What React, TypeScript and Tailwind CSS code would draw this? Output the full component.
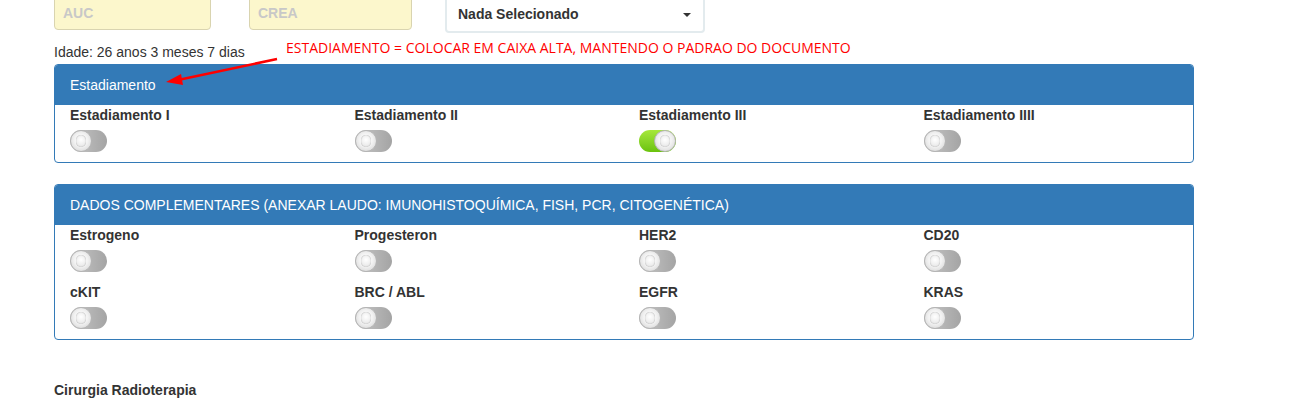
const estadios = ["Estadiamento I", "Estadiamento II", "Estadiamento III", "Estadiamento IIII"];

const complementares = ["Estrogeno", "Progesteron", "HER2", "CD20", "cKIT", "BRC / ABL", "EGFR", "KRAS"];

function Toggle({ on = false }: { on?: boolean }) {
  return (
    <div
      className={`relative h-[22px] w-[37px] rounded-full ${
        on ? "bg-gradient-to-b from-[#a6e83a] to-[#6ac20c]" : "bg-gradient-to-r from-[#c8c8c8] to-[#a4a4a4]"
      }`}
    >
      <div
        className={`absolute top-0 flex h-[22px] w-[22px] items-center justify-center rounded-full border border-[#b5b5b5] bg-[radial-gradient(circle_at_50%_45%,#ffffff_0%,#f2f2f2_45%,#cfcfcf_100%)] ${
          on ? "right-0" : "left-0"
        }`}
      >
        <div className="h-[12px] w-[10px] rounded-full bg-[radial-gradient(circle_at_50%_40%,#ffffff_0%,#e2e2e2_100%)] shadow-[inset_0_0_1px_#999]" />
      </div>
    </div>
  );
}

function Field({ label, on }: { label: string; on?: boolean }) {
  return (
    <div className="px-[15px]">
      <div className="h-5 text-[14px] font-bold leading-5 text-[#333]">{label}</div>
      <div className="mt-[5px]">
        <Toggle on={on} />
      </div>
    </div>
  );
}

function Panel({ title, children }: { title: string; children: React.ReactNode }) {
  return (
    <div className="rounded-[4px] border border-[#337ab7]">
      <div className="h-10 rounded-t-[3px] bg-[#337ab7] px-[15px] text-[14px] leading-10 text-white">{title}</div>
      <div className="pb-[10px]">{children}</div>
    </div>
  );
}

export default function App() {
  return (
    <div className="relative h-[406px] w-[1290px] overflow-hidden bg-white font-['Liberation_Sans',Arial,sans-serif] text-[#333]">
      <div className="ml-[54px] w-[1140px]">
        <div className="-mt-1 flex items-start">
          <div className="flex h-[34px] w-[157px] items-center rounded-[4px] border border-[#d9d4b0] bg-[#fcf7cc] px-[8px] text-[14px] font-bold text-[#c8c8c8]">
            AUC
          </div>
          <div className="ml-[38px] flex h-[34px] w-[163px] items-center rounded-[4px] border border-[#d9d4b0] bg-[#fcf7cc] px-[8px] text-[14px] font-bold text-[#c8c8c8]">
            CREA
          </div>
          <div className="ml-[33px] flex h-[37px] w-[260px] items-center justify-between rounded-[4px] border-2 border-[#e3ebee] bg-white pl-[11px] pr-[12px] text-[14px] font-bold text-[#333]">
            <span>Nada Selecionado</span>
            <span className="h-0 w-0 border-x-[4px] border-t-[4px] border-x-transparent border-t-[#333]" />
          </div>
        </div>

        <div className="mt-[9px] h-[20px] text-[14px] leading-[20px]">Idade: 26 anos 3 meses 7 dias</div>

        <div className="mt-[2px]">
          <Panel title="Estadiamento">
            <div className="grid grid-cols-4">
              {estadios.map((e, i) => (
                <Field key={e} label={e} on={i === 2} />
              ))}
            </div>
          </Panel>
        </div>

        <div className="mt-[21px]">
          <Panel title="DADOS COMPLEMENTARES (ANEXAR LAUDO: IMUNOHISTOQUÍMICA, FISH, PCR, CITOGENÉTICA)">
            <div className="grid grid-cols-4 gap-y-[10px]">
              {complementares.map((c) => (
                <Field key={c} label={c} />
              ))}
            </div>
          </Panel>
        </div>

        <div className="mt-[40px] text-[14px] font-bold leading-5">Cirurgia Radioterapia</div>
      </div>

      {/* anotacao */}
      <div className="absolute left-[286px] top-[38px] whitespace-nowrap font-['Open_Sans',sans-serif] text-[14px] leading-[20px] text-[#ff0000]">
        ESTADIAMENTO = COLOCAR EM CAIXA ALTA, MANTENDO O PADRAO DO DOCUMENTO
      </div>
      <svg className="absolute left-0 top-0" width="300" height="100" viewBox="0 0 300 100">
        <line x1="277" y1="59" x2="178" y2="80" stroke="#ff0000" strokeWidth="2.5" />
        <polygon points="166,82 181,74 183,85" fill="#ff0000" />
      </svg>
    </div>
  );
}
